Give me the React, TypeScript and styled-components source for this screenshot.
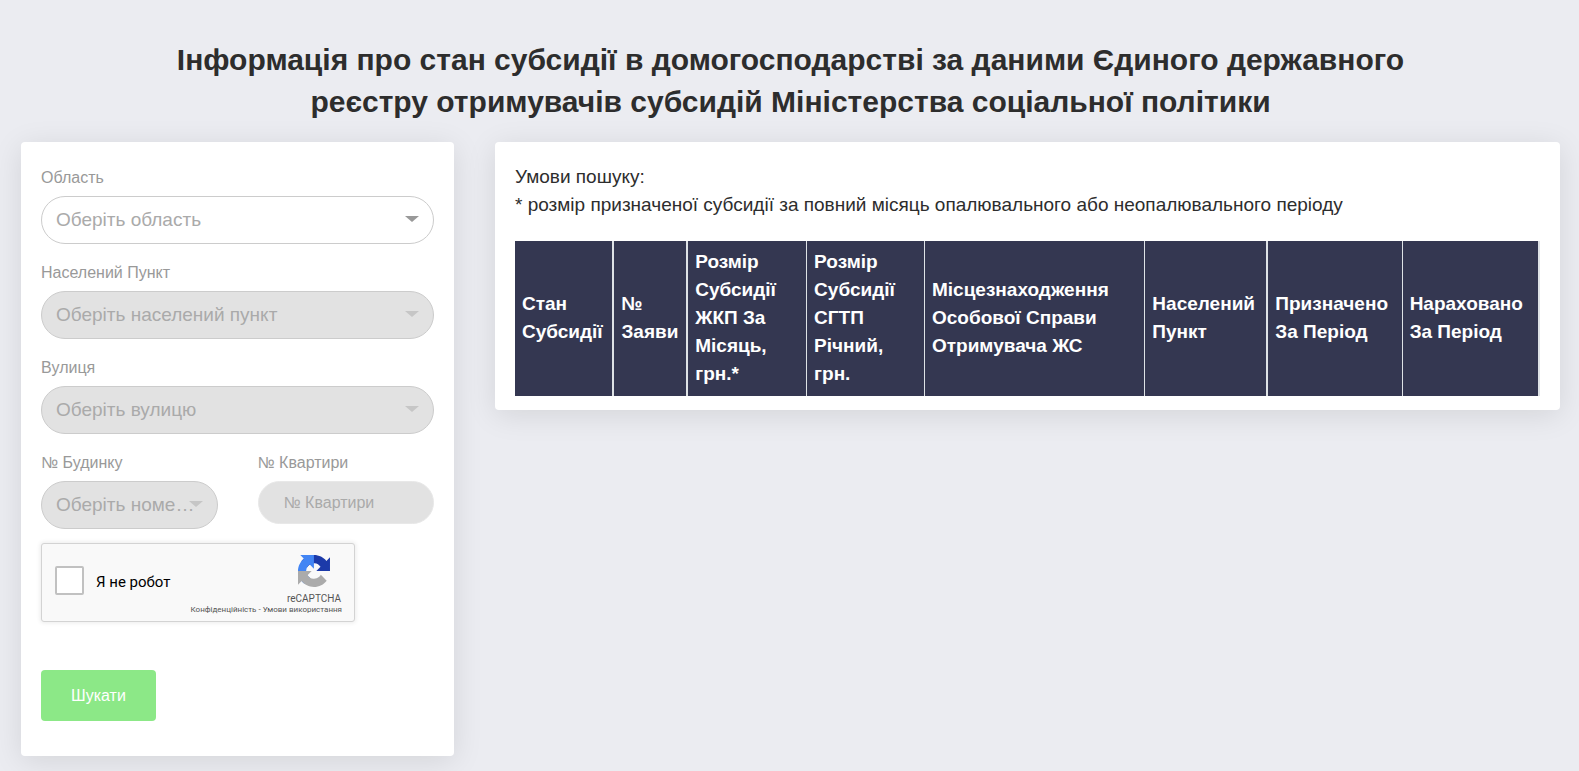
import React from "react";
import styled, { createGlobalStyle } from "styled-components";

const GlobalStyle = createGlobalStyle`
  *, *::before, *::after { box-sizing: border-box; }
  body {
    margin: 0;
    background: #ebecf1;
    color: #2d2d2d;
    font-family: "Liberation Sans", Arial, sans-serif;
    font-size: 19px;
    line-height: 28px;
  }
  button, input, select { font-family: inherit; }
`;

const Page = styled.main`
  padding: 39px 19px 15px 21px;
`;

const Title = styled.h1`
  max-width: 1300px;
  margin: 0 auto 19px;
  font-size: 30px;
  line-height: 42px;
  font-weight: 700;
  text-align: center;
`;

const Columns = styled.div`
  display: grid;
  grid-template-columns: minmax(0, 433fr) minmax(0, 1065fr);
  gap: 41px;
  align-items: start;
`;

const cardShadow = "0 5px 30px rgba(0, 0, 0, 0.1)";

const SearchForm = styled.form`
  display: flex;
  flex-direction: column;
  gap: 13px;
  padding: 20px 20px 35px;
  background: #fff;
  border-radius: 4px;
  box-shadow: ${cardShadow};
`;

const Results = styled.section`
  padding: 21px 20px 14px;
  background: #fff;
  border-radius: 4px;
  box-shadow: ${cardShadow};
`;

const Field = styled.div`
  display: flex;
  flex-direction: column;
  gap: 2px;
  min-width: 0;
`;

const FieldRow = styled.div`
  display: grid;
  grid-template-columns: minmax(0, 1fr) minmax(0, 1fr);
  gap: 40px;
`;

const Label = styled.label`
  font-size: 16px;
  line-height: 32px;
  color: #999;
`;

const SelectBox = styled.div`
  position: relative;
`;

const Select = styled.select`
  appearance: none;
  display: block;
  width: 100%;
  height: 48px;
  padding: 0 20px 2px 14px;
  border: 1px solid #ccc;
  border-radius: 24px;
  background: #fff;
  color: #aaa;
  font-size: 19px;
  text-overflow: ellipsis;
  white-space: nowrap;
  overflow: hidden;

  &:disabled {
    background: #e2e2e2;
    opacity: 1;
  }
`;

const Arrow = styled.span<{ $muted?: boolean }>`
  position: absolute;
  top: 20px;
  right: 15px;
  border: 7px solid transparent;
  border-top: 6px solid ${(p) => (p.$muted ? "#c6c6c6" : "#999")};
  border-bottom-width: 0;
  pointer-events: none;
`;

const TextInput = styled.input`
  width: 100%;
  height: 43px;
  padding: 0 25px;
  border: 1px solid #e8e8e8;
  border-radius: 22px;
  background: #e2e2e2;
  font-size: 16px;
  &::placeholder { color: #aaa; opacity: 1; }
`;

const Captcha = styled.div`
  display: flex;
  align-items: center;
  width: 314px;
  max-width: 100%;
  height: 79px;
  margin-top: 1px;
  padding: 0 12px 0 13px;
  border: 1px solid #d3d3d3;
  border-radius: 3px;
  background: #f9f9f9;
  box-shadow: 0 0 4px 1px rgba(0, 0, 0, 0.08);
  font-family: Roboto, "Liberation Sans", sans-serif;
`;

const CaptchaCheck = styled.input`
  appearance: none;
  flex: none;
  width: 29px;
  height: 29px;
  margin: 0 12px 4px 0;
  border: 2px solid #c1c1c1;
  border-radius: 2px;
  background: #fff;
`;

const CaptchaLabel = styled.label`
  flex: none;
  padding-bottom: 2px;
  font-size: 15px;
  line-height: 18px;
  color: #000;
`;

const CaptchaBrand = styled.div`
  flex: 1;
  display: flex;
  flex-direction: column;
  align-items: flex-end;
  min-width: 0;
  margin-left: -60px;
  padding-top: 3px;
`;

const BrandMark = styled.div`
  display: flex;
  flex-direction: column;
  align-items: center;
  gap: 5px;
  margin-right: 1px;
  color: #555;
  font-size: 10px;
  line-height: 14px;
`;

const Terms = styled.div`
  color: #555;
  font-size: 8px;
  line-height: 8px;
  white-space: nowrap;
  a { color: inherit; text-decoration: none; }
`;

const SubmitButton = styled.button`
  align-self: flex-start;
  height: 51px;
  margin-top: 35px;
  padding: 0 30px;
  border: 0;
  border-radius: 4px;
  background: #8ce887;
  color: #fff;
  font-size: 16px;
`;

const Conditions = styled.p`
  margin: 0 0 22px;
`;

const Table = styled.table`
  width: 100%;
  border-collapse: separate;
  border-spacing: 0;
  table-layout: fixed;
`;

const HeadCell = styled.th<{ $share: number; $rule: number }>`
  width: ${(p) => p.$share}%;
  padding: 7px 7px 8px;
  border-right: ${(p) => p.$rule}px solid #dee2e6;
  background: #343751;
  color: #fff;
  font-weight: 700;
  text-align: left;
  vertical-align: middle;
`;

const columns = [
  { title: "Стан Субсидії", share: 9.7, rule: 2 },
  { title: "№ Заяви", share: 7.2, rule: 2 },
  { title: "Розмір Субсидії ЖКП За Місяць, грн.*", share: 11.6, rule: 1 },
  { title: "Розмір Субсидії СГТП Річний, грн.", share: 11.5, rule: 1 },
  { title: "Місцезнаходження Особової Справи Отримувача ЖС", share: 21.5, rule: 1 },
  { title: "Населений Пункт", share: 12, rule: 2 },
  { title: "Призначено За Період", share: 13.1, rule: 1 },
  { title: "Нараховано За Період", share: 13.4, rule: 2 },
];

type SelectFieldProps = {
  id: string;
  label: string;
  placeholder: string;
  disabled?: boolean;
};

const SelectField = ({ id, label, placeholder, disabled }: SelectFieldProps) => (
  <Field>
    <Label htmlFor={id}>{label}</Label>
    <SelectBox>
      <Select id={id} defaultValue="" disabled={disabled}>
        <option value="">{placeholder}</option>
      </Select>
      <Arrow $muted={disabled} />
    </SelectBox>
  </Field>
);

const RecaptchaLogo = () => (
  <svg width="32" height="32" viewBox="0 0 64 64" aria-hidden="true">
    <path fill="#1c3aa9" d="M64 31.955l-.033-1.37V4.687l-7.16 7.16C50.948 4.674 42.033.093 32.05.093c-10.4 0-19.622 4.96-25.458 12.64l11.736 11.86a15.55 15.55 0 0 1 4.754-5.334c2.05-1.6 4.952-2.906 8.968-2.906.485 0 .86.057 1.135.163 4.976.393 9.288 3.14 11.828 7.124l-8.307 8.307L64 31.953" />
    <path fill="#4285f4" d="M31.862.094l-1.37.033H4.594l7.16 7.16C4.58 13.147 0 22.06 0 32.046c0 10.4 4.96 19.622 12.64 25.458L24.5 45.768a15.55 15.55 0 0 1-5.334-4.754c-1.6-2.05-2.906-4.952-2.906-8.968 0-.485.057-.86.163-1.135.393-4.976 3.14-9.288 7.124-11.828l8.307 8.307L31.86.095" />
    <path fill="#ababab" d="M.001 32.045l.033 1.37v25.898l7.16-7.16c5.86 7.173 14.774 11.754 24.76 11.754 10.4 0 19.622-4.96 25.458-12.64l-11.736-11.86a15.55 15.55 0 0 1-4.754 5.334c-2.05 1.6-4.952 2.906-8.968 2.906-.485 0-.86-.057-1.135-.163-4.976-.393-9.288-3.14-11.828-7.124l8.307-8.307c-10.522.04-22.4.066-27.295-.005" />
  </svg>
);

export default function App() {
  return (
    <>
      <GlobalStyle />
      <Page>
        <Title>
          Інформація про стан субсидії в домогосподарстві за даними Єдиного державного реєстру
          отримувачів субсидій Міністерства соціальної політики
        </Title>
        <Columns>
          <SearchForm onSubmit={(e) => e.preventDefault()}>
            <SelectField id="region" label="Область" placeholder="Оберіть область" />
            <SelectField id="city" label="Населений Пункт" placeholder="Оберіть населений пункт" disabled />
            <SelectField id="street" label="Вулиця" placeholder="Оберіть вулицю" disabled />
            <FieldRow>
              <SelectField id="house" label="№ Будинку" placeholder="Оберіть номер будинку" disabled />
              <Field>
                <Label htmlFor="flat">№ Квартири</Label>
                <TextInput id="flat" placeholder="№ Квартири" disabled />
              </Field>
            </FieldRow>
            <Captcha>
              <CaptchaCheck id="human" type="checkbox" />
              <CaptchaLabel htmlFor="human">Я не робот</CaptchaLabel>
              <CaptchaBrand>
                <BrandMark>
                  <RecaptchaLogo />
                  reCAPTCHA
                </BrandMark>
                <Terms>
                  <a href="#privacy">Конфіденційність</a> - <a href="#terms">Умови використання</a>
                </Terms>
              </CaptchaBrand>
            </Captcha>
            <SubmitButton type="submit">Шукати</SubmitButton>
          </SearchForm>
          <Results>
            <Conditions>
              Умови пошуку:
              <br />* розмір призначеної субсидії за повний місяць опалювального або неопалювального
              періоду
            </Conditions>
            <Table>
              <thead>
                <tr>
                  {columns.map((c) => (
                    <HeadCell key={c.title} $share={c.share} $rule={c.rule} scope="col">
                      {c.title}
                    </HeadCell>
                  ))}
                </tr>
              </thead>
            </Table>
          </Results>
        </Columns>
      </Page>
    </>
  );
}
